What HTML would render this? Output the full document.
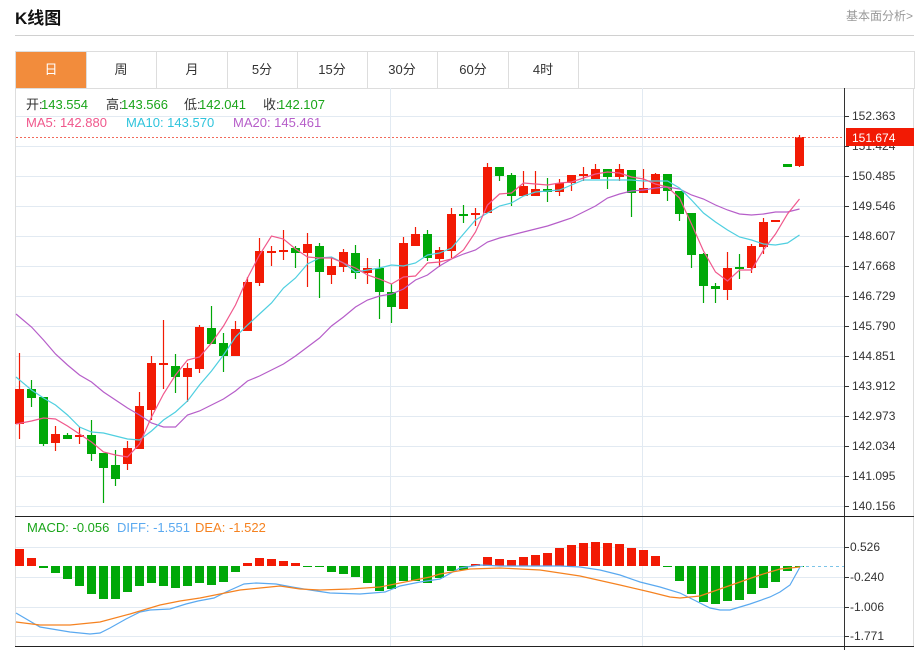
<!DOCTYPE html>
<html><head><meta charset="utf-8"><style>
body{margin:0;width:919px;height:650px;background:#fff;font-family:"Liberation Sans","Noto Sans CJK SC",sans-serif;overflow:hidden;position:relative}
.t{position:absolute;left:15px;top:4px;font-size:17px;font-weight:bold;color:#111}
.r{position:absolute;right:6px;top:7px;font-size:12px;color:#999}
.hl{position:absolute;left:15px;top:35px;width:899px;height:1px;background:#d0d0d0}
.tabs{position:absolute;left:15px;top:51px;width:898px;height:36px;border:1px solid #ddd;border-right:1px solid #ddd}
.tab{position:absolute;top:0;height:36px;width:70px;border-right:1px solid #ddd;text-align:center;line-height:36px;font-size:13px;color:#333}
.tab.on{background:#f28c3c;color:#fff}
svg{position:absolute;left:0;top:0}
</style></head><body>
<div class="t">K线图</div><div class="r">基本面分析&gt;</div><div class="hl"></div>
<div class="tabs">
<div class="tab on" style="left:0">日</div><div class="tab" style="left:70px">周</div><div class="tab" style="left:141px">月</div><div class="tab" style="left:211px">5分</div><div class="tab" style="left:281px">15分</div><div class="tab" style="left:351px">30分</div><div class="tab" style="left:422px">60分</div><div class="tab" style="left:492px">4时</div>
</div>
<svg id="s" width="919" height="650" xmlns="http://www.w3.org/2000/svg"></svg>
<script>
var s='';
function L(x1,y1,x2,y2,c,w,d){s+='<line x1="'+x1+'" y1="'+y1+'" x2="'+x2+'" y2="'+y2+'" stroke="'+c+'" stroke-width="'+(w||1)+'"'+(d?' stroke-dasharray="'+d+'"':'')+'/>';}
function T(x,y,t,c,sz,a){s+='<text x="'+x+'" y="'+y+'" fill="'+c+'" font-size="'+(sz||12)+'"'+(a?' text-anchor="'+a+'"':'')+'>'+t+'</text>';}
s+='<rect x="15.5" y="88.5" width="898" height="558" fill="none" stroke="#ddd"/>';
var labs=['152.363','151.424','150.485','149.546','148.607','147.668','146.729','145.790','144.851','143.912','142.973','142.034','141.095','140.156'];
for(var i=0;i<14;i++){var y=116+30*i+.5;L(16,y,844,y,'#e2eaf2');L(844,y,849,y,'#333');}
L(390.5,88,390.5,646,'#e2eaf2');L(642.5,88,642.5,646,'#e2eaf2');
var my=[547,577,607,636];for(i=0;i<4;i++){L(16,my[i]+.5,844,my[i]+.5,'#e2eaf2');L(844,my[i]+.5,849,my[i]+.5,'#333');}
var C=[[353,389,424,439,1],[380,389,398,407,0],[397,397,444,446,0],[426,434,443,451,1],[433,435,439,439,0],[427,435,436,444,1],[420,435,454,461,0],[453,453,468,503,0],[450,465,479,486,0],[441,448,464,470,1],[392,406,449,449,1],[356,363,410,420,1],[320,363,364,389,1],[354,366,377,393,0],[363,368,377,402,1],[325,327,369,373,1],[306,328,344,344,0],[333,343,356,372,0],[321,329,356,356,1],[277,282,331,331,1],[238,251,283,286,1],[246,251,253,266,1],[230,250,252,260,1],[246,248,253,268,0],[233,244,253,287,1],[243,246,272,298,0],[257,266,275,284,1],[249,252,267,272,1],[245,253,273,279,0],[258,268,273,284,1],[259,268,292,319,0],[284,292,307,323,0],[237,243,309,309,1],[227,234,246,246,1],[230,234,258,261,0],[247,250,259,267,1],[208,214,251,258,1],[205,214,216,223,0],[208,213,215,226,1],[163,167,213,213,1],[167,167,176,181,0],[173,175,196,206,0],[171,186,196,196,1],[171,189,196,196,1],[178,189,192,202,0],[179,183,192,196,1],[175,175,183,191,1],[167,174,176,181,1],[164,169,179,179,1],[169,169,177,189,0],[164,169,177,181,1],[170,170,193,217,0],[169,188,193,193,1],[173,174,194,194,1],[174,174,191,201,0],[191,191,214,221,0],[213,213,255,268,0],[253,254,286,303,0],[283,286,289,303,0],[252,268,290,300,1],[254,267,268,279,0],[244,246,268,273,1],[218,222,247,254,1],[220,220,221,221,1],[164,164,167,167,0],[135,137,166,167,1]];
var H=[549,558,568,573,579,586,594,599,599,592,586,583,586,588,586,583,585,582,572,563,558,559,561,563,566,566,572,574,577,583,591,589,581,581,583,578,571,570,564,557,559,560,557,555,553,548,545,543,542,543,544,548,550,556,567,581,594,602,604,601,600,594,588,582,571,566];
for(i=0;i<C.length;i++){var c=C[i],x=19.5+12*i,col=c[4]?'#f21a04':'#00a808';
L(x,c[0],x,c[3],col,1.2);var h=Math.max(c[2]-c[1],2);s+='<rect x="'+(x-4.5)+'" y="'+c[1]+'" width="9" height="'+h+'" fill="'+col+'"/>';
var v=H[i];var t=Math.min(v,566),hh=Math.max(Math.abs(v-566),1);s+='<rect x="'+(x-4.5)+'" y="'+t+'" width="9" height="'+hh+'" fill="'+(v<566?'#f21a04':'#00a808')+'"/>';}
function P(pts,c){s+='<polyline fill="none" stroke="'+c+'" stroke-width="1.2" points="'+pts+'"/>';}
var ma10=[377,390,398,405,415,427,432,433,436,439,440,431,420,412,401,385,371,355,337,325,314,303,288,278,264,258,257,263,272,270,268,265,266,263,255,253,248,234,220,213,206,203,196,192,191,190,185,180,180,180,180,180,181,181,181,188,200,213,222,230,237,240,244,245,243,235];
var ma5=[424,421,418,419,426,434,442,452,455,457,444,417,394,375,360,357,343,326,305,278,255,236,239,249,257,258,258,263,268,275,279,284,277,276,263,262,259,250,232,205,194,193,183,184,185,183,182,178,174,172,173,177,179,184,187,198,224,251,272,281,270,270,250,234,214,199];
function Q(a){var r='';for(var k=0;k<a.length;k++)r+=(k==0?16:19.5+12*k)+','+a[k]+' ';return r;}
P(Q([314,327,340,354,365,375,382,392,400,408,415,423,427,427,415,411,405,399,391,381,376,370,364,356,347,338,326,317,307,300,296,294,289,280,275,266,259,254,250,242,238,235,232,229,226,222,218,212,206,198,194,191,190,188,187,189,195,199,205,210,214,215,214,212,212,209]),'#b65ec9');
P(Q(ma10),'#4fcfe0');P(Q(ma5),'#f0588c');
P('16,613 40,627 70,632 90,634 100,633 110,628 126,619 140,612 150,610 170,609 186,604 198,601 214,598 226,592 244,584 256,583 276,584 292,587 310,590 330,593 360,594 385,592 400,586 420,582 440,579 460,568 480,565 500,566 560,566 580,567 600,570 620,575 640,582 660,587 680,593 700,603 710,608 720,610 730,610 750,604 770,597 780,592 790,585 800,567','#5aa9f0');
P('16,622 40,625 70,625 100,622 130,614 160,605 180,601 200,598 220,594 240,590 260,588 280,586 300,589 320,590 350,589 380,587 400,583 430,577 440,574 470,569 500,568 540,570 580,576 620,585 650,592 670,597 680,598 700,596 720,589 740,582 760,575 780,569 800,567','#f58220');
L(800,566.5,844,566.5,'#7cc4e8',1,'3,3');
L(16,137.5,844,137.5,'#f26a5a',1,'2,2');
L(844.5,88,844.5,650,'#333');L(15,516.5,914,516.5,'#222');L(15,646.5,914,646.5,'#222');
for(i=0;i<14;i++)T(852,120+30*i,labs[i],'#333',12);
s+='<rect x="846" y="128" width="68" height="18" fill="#f21a04"/>';T(852,142,'151.674','#fff',12);
var ml=['0.526','-0.240','-1.006','-1.771'];for(i=0;i<4;i++)T(850,my[i]+4,ml[i],'#333',12);
var G='#1aa51a';
T(26,109,'开:','#333',13);T(41,109,'143.554',G,13);
T(106,109,'高:','#333',13);T(121,109,'143.566',G,13);
T(184,109,'低:','#333',13);T(199,109,'142.041',G,13);
T(263,109,'收:','#333',13);T(278,109,'142.107',G,13);
T(26,127,'MA5: 142.880','#f0588c',13);T(126,127,'MA10: 143.570','#2fc4dc',13);T(233,127,'MA20: 145.461','#b65ec9',13);
T(27,532,'MACD: -0.056',G,13);T(117,532,'DIFF: -1.551','#5aa9f0',13);T(195,532,'DEA: -1.522','#f58220',13);
document.getElementById('s').innerHTML=s;
</script>
</body></html>
